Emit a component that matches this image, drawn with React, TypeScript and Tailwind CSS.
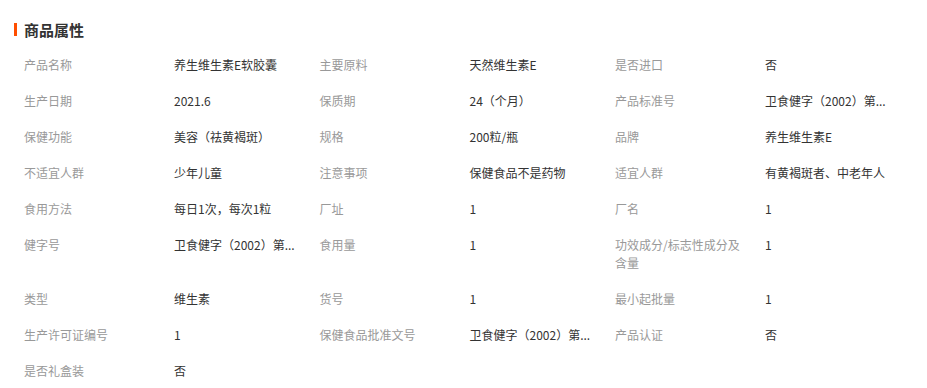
import React from "react";

type Pair = { label: string; value: string };

const rows: Pair[][] = [
  [
    { label: "产品名称", value: "养生维生素E软胶囊" },
    { label: "主要原料", value: "天然维生素E" },
    { label: "是否进口", value: "否" },
  ],
  [
    { label: "生产日期", value: "2021.6" },
    { label: "保质期", value: "24（个月）" },
    { label: "产品标准号", value: "卫食健字（2002）第..." },
  ],
  [
    { label: "保健功能", value: "美容（祛黄褐斑）" },
    { label: "规格", value: "200粒/瓶" },
    { label: "品牌", value: "养生维生素E" },
  ],
  [
    { label: "不适宜人群", value: "少年儿童" },
    { label: "注意事项", value: "保健食品不是药物" },
    { label: "适宜人群", value: "有黄褐斑者、中老年人" },
  ],
  [
    { label: "食用方法", value: "每日1次，每次1粒" },
    { label: "厂址", value: "1" },
    { label: "厂名", value: "1" },
  ],
  [
    { label: "健字号", value: "卫食健字（2002）第..." },
    { label: "食用量", value: "1" },
    { label: "功效成分/标志性成分及含量", value: "1" },
  ],
  [
    { label: "类型", value: "维生素" },
    { label: "货号", value: "1" },
    { label: "最小起批量", value: "1" },
  ],
  [
    { label: "生产许可证编号", value: "1" },
    { label: "保健食品批准文号", value: "卫食健字（2002）第..." },
    { label: "产品认证", value: "否" },
  ],
  [{ label: "是否礼盒装", value: "否" }],
];

export default function App() {
  return (
    <div
      className="w-[927px] h-[388px] bg-white overflow-hidden"
      style={{ fontFamily: '"Noto Sans CJK SC", "Microsoft YaHei", sans-serif' }}
    >
      <div className="flex items-center pl-[14px] pt-[20px] h-[39px]">
        <span className="w-[3px] h-[13px] bg-[#ff4e00] mr-[7px]" />
        <span className="text-[15px] leading-[18px] font-bold text-[#333]">商品属性</span>
      </div>
      <div className="pl-[24px] pt-[8px]">
        {rows.map((row, i) => (
          <div key={i} className="flex py-[9px] text-[12px] leading-[18px]">
            {row.map((p, j) => (
              <div key={j} className="flex">
                <div className="w-[150px] pr-[20px] text-[#999]">{p.label}</div>
                <div className="w-[145.5px] pr-[10px] text-[#333] whitespace-nowrap">{p.value}</div>
              </div>
            ))}
          </div>
        ))}
      </div>
    </div>
  );
}
